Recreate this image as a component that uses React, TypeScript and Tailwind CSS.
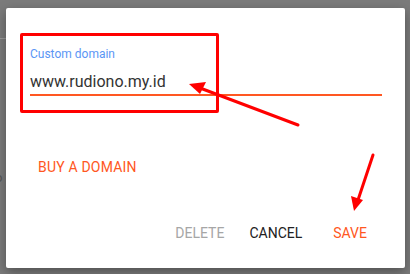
import React from "react";

export default function App() {
  return (
    <div
      className="relative w-[410px] h-[274px] overflow-hidden bg-[#7b7b7b] pt-[8px] pl-[6px]"
      style={{ fontFamily: "Roboto, 'Liberation Sans', sans-serif" }}
    >
      {/* faint background page hints */}
      <div className="absolute left-0 top-[38px] w-[6px] h-px bg-[#9a9a9a]" />
      <div className="absolute left-0 top-[170px] text-[13px] leading-4 text-[#555] -translate-x-[5px]">o</div>

      <div className="relative w-[399px] h-[260px] bg-white rounded-[2px] shadow-[0_4px_12px_rgba(0,0,0,0.35)] pl-6 pr-[23px] pt-[38px]">
        <div className="flex flex-col">
          <div className="text-[12px] leading-4 text-[#5b96f5]">Custom domain</div>
          <div className="mt-2 h-[26px] text-[16px] leading-6 text-[#333] border-b-2 border-[#ff5722]">
            www.rudiono.my.id
          </div>
        </div>
        <div className="mt-[61px] ml-2 text-[14px] leading-5 font-normal tracking-[0.2px] text-[#ff5722]">
          BUY A DOMAIN
        </div>
        <div className="mt-[46px] flex justify-end pr-[15px] text-[14px] leading-5 font-normal">
          <span className="text-[#a6a6a6]">DELETE</span>
          <span className="ml-[25px] text-[#212121]">CANCEL</span>
          <span className="ml-[31px] text-[#ff5722]">SAVE</span>
        </div>
      </div>

      {/* annotations */}
      <div className="absolute left-[20px] top-[33px] w-[199px] h-[80px] border-[3px] border-[#ff0000] rounded-[2px]" />
      <svg className="absolute left-0 top-0" width="410" height="274" viewBox="0 0 410 274">
        <line x1="298" y1="125" x2="200" y2="88" stroke="#ff0000" strokeWidth="3" strokeLinecap="round" />
        <polygon points="189,84 206,82 200,94" fill="#ff0000" />
        <line x1="373" y1="155" x2="358" y2="200" stroke="#ff0000" strokeWidth="3" strokeLinecap="round" />
        <polygon points="354,211 351,196 363,200" fill="#ff0000" />
      </svg>
    </div>
  );
}
